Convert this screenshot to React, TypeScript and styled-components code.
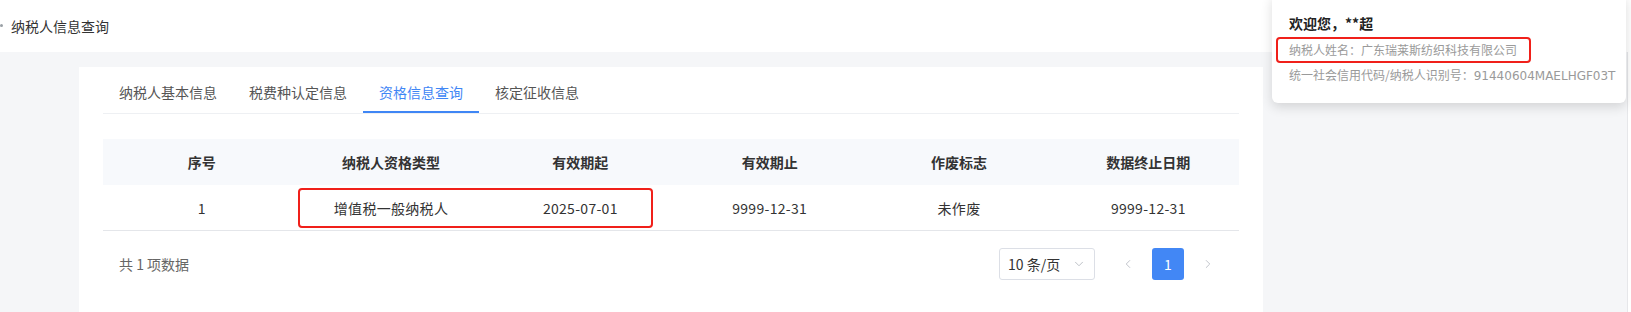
import React from "react";
import styled, { createGlobalStyle } from "styled-components";
import { ChevronDown, ChevronLeft, ChevronRight } from "lucide-react";

const GlobalStyle = createGlobalStyle`
  html, body {
    margin: 0;
    padding: 0;
  }
  body {
    font-family: "Noto Sans CJK SC", "Noto Sans", sans-serif;
    background: #f5f6f8;
    color: #333;
  }
`;

const tabs = ["纳税人基本信息", "税费种认定信息", "资格信息查询", "核定征收信息"];
const columns = ["序号", "纳税人资格类型", "有效期起", "有效期止", "作废标志", "数据终止日期"];
const rows = [["1", "增值税一般纳税人", "2025-07-01", "9999-12-31", "未作废", "9999-12-31"]];

export default function App() {
  return (
    <>
      <GlobalStyle />
      <Page>
        <Header>
          <Dot />
          <Title>纳税人信息查询</Title>
        </Header>
        <Body>
          <Content>
            <Card>
              <Tabs>
                {tabs.map((t, i) => (
                  <Tab key={t} $active={i === 2}>
                    {t}
                  </Tab>
                ))}
              </Tabs>
              <Table>
                <HeadRow>
                  {columns.map((c) => (
                    <HeadCell key={c}>{c}</HeadCell>
                  ))}
                </HeadRow>
                {rows.map((r, i) => (
                  <BodyRow key={i}>
                    {r.map((v, j) => (
                      <Cell key={j}>{v}</Cell>
                    ))}
                    <RowMark />
                  </BodyRow>
                ))}
              </Table>
              <Footer>
                <Total>共 1 项数据</Total>
                <Pager>
                  <SizeSelect>
                    <span>10 条/页</span>
                    <ChevronDown size={14} strokeWidth={1.5} color="#b4b8bf" />
                  </SizeSelect>
                  <PageBtn $arrow>
                    <ChevronLeft size={14} strokeWidth={1.5} />
                  </PageBtn>
                  <PageBtn $active>1</PageBtn>
                  <PageBtn $arrow>
                    <ChevronRight size={14} strokeWidth={1.5} />
                  </PageBtn>
                </Pager>
              </Footer>
            </Card>
          </Content>
          <ScrollEdge />
        </Body>
        <UserPop>
          <Welcome>欢迎您，**超</Welcome>
          <Marked>纳税人姓名：广东瑞莱斯纺织科技有限公司</Marked>
          <Info>
            统一社会信用代码/纳税人识别号：<IdNo>91440604MAELHGF03T</IdNo>
          </Info>
        </UserPop>
      </Page>
    </>
  );
}

const Page = styled.div`
  position: relative;
  width: 1631px;
  height: 312px;
  overflow: hidden;
  display: flex;
  flex-direction: column;
`;

const Header = styled.div`
  height: 52px;
  flex-shrink: 0;
  background: #fff;
  display: flex;
  align-items: center;
`;

const Dot = styled.span`
  width: 3px;
  height: 3px;
  border-radius: 50%;
  background: #9aa0a6;
  margin: 0 8px 2px 0;
`;

const Title = styled.div`
  font-size: 14px;
  line-height: 20px;
  color: #333;
`;

const Body = styled.div`
  flex: 1;
  display: flex;
  min-height: 0;
`;

const Content = styled.div`
  flex: 1;
  padding: 15px 0 0 79px;
`;

const Card = styled.div`
  width: 1184px;
  height: 100%;
  box-sizing: border-box;
  background: #fff;
  padding: 6px 24px 0;
`;

const ScrollEdge = styled.div`
  width: 3px;
  background: #fff;
  border-left: 1px solid #e6e7ea;
`;

const Tabs = styled.div`
  display: flex;
  border-bottom: 1px solid #eef0f3;
`;

const Tab = styled.div<{ $active?: boolean }>`
  padding: 8px 16px;
  font-size: 14px;
  line-height: 22px;
  color: ${(p) => (p.$active ? "#3f86f5" : "#555")};
  border-bottom: 2px solid ${(p) => (p.$active ? "#3f86f5" : "transparent")};
`;

const Table = styled.div`
  margin-top: 25px;
`;

const HeadRow = styled.div`
  display: grid;
  grid-template-columns: repeat(6, 1fr);
  height: 46px;
  background: #f7f9fc;
`;

const HeadCell = styled.div`
  display: flex;
  align-items: center;
  justify-content: center;
  padding-left: 8px;
  font-size: 14px;
  font-weight: 700;
  color: #333;
`;

const BodyRow = styled.div`
  position: relative;
  display: grid;
  grid-template-columns: repeat(6, 1fr);
  height: 45px;
  border-bottom: 1px solid #e4e6ea;
`;

const Cell = styled.div`
  display: flex;
  align-items: center;
  justify-content: center;
  padding-left: 8px;
  font-size: 14px;
  letter-spacing: 0.3px;
  color: #333;
`;

const RowMark = styled.div`
  position: absolute;
  left: 195px;
  top: 3px;
  width: 355px;
  height: 40px;
  box-sizing: border-box;
  border: 2px solid #f0201a;
  border-radius: 4px;
  pointer-events: none;
`;

const Footer = styled.div`
  display: flex;
  align-items: center;
  justify-content: space-between;
  padding: 17px 15px 0 16px;
`;

const Total = styled.div`
  font-size: 14px;
  color: #666;
`;

const Pager = styled.div`
  display: flex;
  align-items: center;
  gap: 8px;
`;

const SizeSelect = styled.div`
  width: 96px;
  height: 32px;
  box-sizing: border-box;
  border: 1px solid #dcdfe6;
  border-radius: 3px;
  padding: 0 8px;
  margin-right: 9px;
  display: flex;
  align-items: center;
  justify-content: space-between;
  font-size: 14px;
  color: #333;
`;

const PageBtn = styled.div<{ $active?: boolean; $arrow?: boolean }>`
  width: 32px;
  height: 32px;
  border-radius: 3px;
  display: flex;
  align-items: center;
  justify-content: center;
  font-size: 14px;
  background: ${(p) => (p.$active ? "#4287f5" : "transparent")};
  color: ${(p) => (p.$active ? "#fff" : "#b8bcc4")};
`;

const UserPop = styled.div`
  position: absolute;
  top: -6px;
  left: 1272px;
  width: 354px;
  box-sizing: border-box;
  padding: 18px 16px 18px 17px;
  background: #fff;
  border-radius: 6px;
  box-shadow: 0 4px 12px rgba(0, 0, 0, 0.14);
  display: flex;
  flex-direction: column;
  align-items: flex-start;
`;

const Welcome = styled.div`
  font-size: 14px;
  line-height: 22px;
  font-weight: 700;
  color: #222;
`;

const Marked = styled.div`
  margin: 3px 0 0 -13px;
  padding: 2px 12px 2px 11px;
  border: 2px solid #f0201a;
  border-radius: 4px;
  font-size: 12px;
  line-height: 18px;
  color: #9a9a9a;
`;

const Info = styled.div`
  margin-top: 3px;
  font-size: 12px;
  line-height: 18px;
  color: #9a9a9a;
  white-space: nowrap;
`;

const IdNo = styled.span`
  font-family: "DejaVu Sans", "Noto Sans", sans-serif;
  font-size: 12px;
`;
